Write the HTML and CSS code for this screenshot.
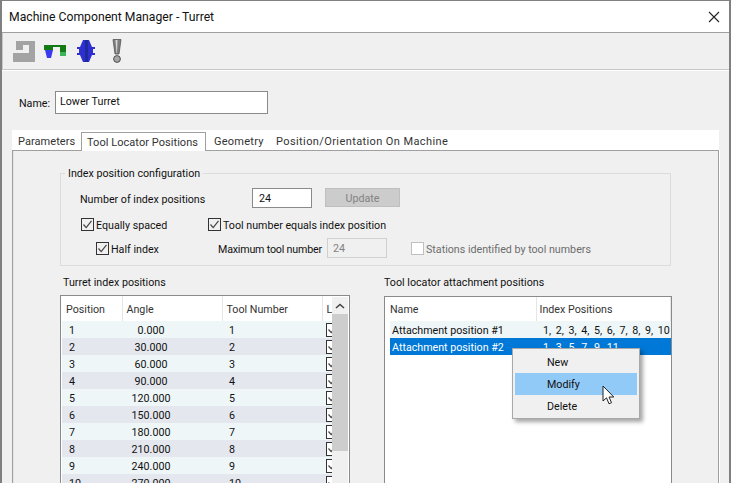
FILE: index.html
```html
<!DOCTYPE html>
<html lang="en">
<head>
    <meta charset="UTF-8">
    <meta name="viewport" content="width=device-width, initial-scale=1.0">
    <title>Machine Component Manager - Turret</title>
    <link rel="stylesheet" href="styles.css">
</head>
<body>
    <svg class="sprites" width="0" height="0">
        <symbol id="tick" viewBox="0 0 13 13">
            <path d="M2.5 6.5 L5.2 9.6 L10.5 2.8" fill="none" stroke="#444" stroke-width="1.2"/>
        </symbol>
    </svg>

    <div class="window">
        <div class="titlebar">
            <span>Machine Component Manager - Turret</span>
            <svg class="close" width="12" height="12" viewBox="0 0 12 12">
                <path d="M1 1 L11 11 M11 1 L1 11" stroke="#222" stroke-width="1.1"/>
            </svg>
        </div>

        <div class="toolbar">
            <svg class="tool-icon icon-locator" width="22" height="22" viewBox="0 0 22 22">
                <path d="M3 1 H22 V22 H0 V13 H16 V5 H10 V10 H3 Z" fill="#a3a3a3"/>
            </svg>
            <svg class="tool-icon icon-geometry" width="22" height="14" viewBox="0 0 22 14">
                <path d="M0 1 H22 V12 H16 V3 H9 V6 H0 Z" fill="#147a14"/>
                <path d="M16 8 H22 V12 H16 Z" fill="#3cb45a"/>
                <path d="M1 6 H9 L7 14 H3 Z" fill="#3a3aee"/>
            </svg>
            <svg class="tool-icon icon-turret" width="20" height="22" viewBox="0 0 20 22">
                <path d="M7 0 H13 L16 7 H19 V9 H17 V13 H19 V15 H16 L13 22 H7 L4 15 H1 V13 H3 V9 H1 V7 H4 Z" fill="#2f2fd0"/>
                <path d="M9 0 H12 V22 H9 Z" fill="#1c2a9c"/>
            </svg>
            <svg class="tool-icon icon-alert" width="10" height="24" viewBox="0 0 10 24">
                <path d="M1 0.5 H9 L7 15 H3 Z" fill="#7e7e7e" stroke="#555" stroke-width="0.8"/>
                <path d="M3.5 1 H5.5 L5 14 H4.5 Z" fill="#d8d8d8"/>
                <circle cx="5" cy="20" r="3.4" fill="#a5a5a5" stroke="#444" stroke-width="0.9"/>
            </svg>
        </div>

        <div class="content">
            <div class="name-row">
                <label>Name:</label>
                <div class="field name-field">Lower Turret</div>
            </div>

            <div class="tabs">
                <span class="tab tab-params">Parameters</span>
                <span class="tab active">Tool Locator Positions</span>
                <span class="tab tab-geometry">Geometry</span>
                <span class="tab tab-position">Position/Orientation On Machine</span>
            </div>

            <div class="panel">
                <fieldset class="group">
                    <legend>Index position configuration</legend>
                    <div class="group-row row-count">
                        <span class="count-label">Number of index positions</span>
                        <div class="field count-field">24</div>
                        <div class="update-btn">Update</div>
                    </div>
                    <div class="group-row row-checks">
                        <span class="check check-spaced">
                            <span class="box"><svg width="13" height="13"><use href="#tick"/></svg></span>
                            <span class="check-text">Equally spaced</span>
                        </span>
                        <span class="check">
                            <span class="box"><svg width="13" height="13"><use href="#tick"/></svg></span>
                            <span class="check-text">Tool number equals index position</span>
                        </span>
                    </div>
                    <div class="group-row row-half">
                        <span class="check check-half">
                            <span class="box"><svg width="13" height="13"><use href="#tick"/></svg></span>
                            <span class="check-text">Half index</span>
                        </span>
                        <span class="max-label">Maximum tool number</span>
                        <div class="field max-field">24</div>
                        <span class="check disabled">
                            <span class="box"></span>
                            <span class="check-text">Stations identified by tool numbers</span>
                        </span>
                    </div>
                </fieldset>

                <div class="lists">
                    <div class="list-col left-col">
                        <div class="list-title">Turret index positions</div>
                        <div class="listbox turret-box">
                            <table class="grid turret-grid">
                                <thead>
                                    <tr>
                                        <th class="col-pos">Position</th>
                                        <th class="col-angle">Angle</th>
                                        <th class="col-tool">Tool Number</th>
                                        <th class="col-l"><span class="clip">Locked</span></th>
                                    </tr>
                                </thead>
                                <tbody>
                                    <tr><td>1</td><td class="angle">0.000</td><td>1</td><td class="cell-l"><span class="box"><svg width="13" height="13"><use href="#tick"/></svg></span></td></tr>
                                    <tr><td>2</td><td class="angle">30.000</td><td>2</td><td class="cell-l"><span class="box"><svg width="13" height="13"><use href="#tick"/></svg></span></td></tr>
                                    <tr><td>3</td><td class="angle">60.000</td><td>3</td><td class="cell-l"><span class="box"><svg width="13" height="13"><use href="#tick"/></svg></span></td></tr>
                                    <tr><td>4</td><td class="angle">90.000</td><td>4</td><td class="cell-l"><span class="box"><svg width="13" height="13"><use href="#tick"/></svg></span></td></tr>
                                    <tr><td>5</td><td class="angle">120.000</td><td>5</td><td class="cell-l"><span class="box"><svg width="13" height="13"><use href="#tick"/></svg></span></td></tr>
                                    <tr><td>6</td><td class="angle">150.000</td><td>6</td><td class="cell-l"><span class="box"><svg width="13" height="13"><use href="#tick"/></svg></span></td></tr>
                                    <tr><td>7</td><td class="angle">180.000</td><td>7</td><td class="cell-l"><span class="box"><svg width="13" height="13"><use href="#tick"/></svg></span></td></tr>
                                    <tr><td>8</td><td class="angle">210.000</td><td>8</td><td class="cell-l"><span class="box"><svg width="13" height="13"><use href="#tick"/></svg></span></td></tr>
                                    <tr><td>9</td><td class="angle">240.000</td><td>9</td><td class="cell-l"><span class="box"><svg width="13" height="13"><use href="#tick"/></svg></span></td></tr>
                                    <tr><td>10</td><td class="angle">270.000</td><td>10</td><td class="cell-l"><span class="box"><svg width="13" height="13"><use href="#tick"/></svg></span></td></tr>
                                </tbody>
                            </table>
                            <div class="scrollbar">
                                <div class="scroll-up">
                                    <svg width="10" height="6" viewBox="0 0 10 6"><path d="M1 5 L5 1.5 L9 5" fill="none" stroke="#444" stroke-width="1.6"/></svg>
                                </div>
                                <div class="scroll-thumb"></div>
                            </div>
                        </div>
                    </div>

                    <div class="list-col right-col">
                        <div class="list-title">Tool locator attachment positions</div>
                        <div class="listbox attach-box">
                            <table class="grid attach-grid">
                                <thead>
                                    <tr>
                                        <th class="col-name">Name</th>
                                        <th>Index Positions</th>
                                    </tr>
                                </thead>
                                <tbody>
                                    <tr><td>Attachment position #1</td><td class="index-list">1, 2, 3, 4, 5, 6, 7, 8, 9, 10</td></tr>
                                    <tr class="selected"><td>Attachment position #2</td><td class="index-list">1, 3, 5, 7, 9, 11</td></tr>
                                </tbody>
                            </table>
                        </div>
                    </div>
                </div>
            </div>
        </div>
    </div>

    <div class="menu">
        <div class="menu-item">New</div>
        <div class="menu-item hover">Modify</div>
        <div class="menu-item">Delete</div>
    </div>

    <svg class="cursor" width="13" height="21" viewBox="0 0 13 21">
        <path d="M1 1 V16 L4.5 12.8 L7 18.8 L9.5 17.7 L7 12 H11.8 Z" fill="#fff" stroke="#222" stroke-width="1"/>
    </svg>
</body>
</html>
```

FILE: styles.css
```css
body {
    margin: 0;
    width: 731px;
    height: 483px;
    overflow: hidden;
    position: relative;
    font-family: Roboto, Arial, sans-serif;
    font-size: 10.7px;
    color: #111;
    background-color: #f0f0f0;
}
.sprites {
    position: absolute;
}
.window {
    height: 483px;
    box-sizing: border-box;
    border-top: 1px solid #808080;
    border-left: 2px solid #808080;
    border-right: 2px solid #808080;
    display: flex;
    flex-direction: column;
    overflow: hidden;
}
.titlebar {
    height: 32px;
    flex: none;
    box-sizing: border-box;
    background-color: #fff;
    border-bottom: 1px solid #a0a0a0;
    padding: 0 9px 0 7px;
    display: flex;
    align-items: center;
    justify-content: space-between;
    font-size: 12.2px;
}
.toolbar {
    height: 37px;
    flex: none;
    box-sizing: border-box;
    border-bottom: 1px solid #c8c8c8;
    box-shadow: 0 1px 0 #fff;
    border-left: 1px solid #c8c8c8;
    display: flex;
    align-items: center;
}
.tool-icon {
    flex: none;
}
.icon-locator {
    margin-left: 10px;
}
.icon-geometry {
    margin-left: 9px;
}
.icon-turret {
    margin-left: 10px;
}
.icon-alert {
    margin-left: 16px;
}
.content {
    flex: 1;
    padding: 21px 10px 0 10px;
    min-height: 0;
}
.name-row {
    display: flex;
    align-items: center;
    height: 23px;
    padding-left: 7px;
}
.name-row label {
    width: 36px;
    padding-top: 1px;
}
.field {
    box-sizing: border-box;
    background-color: #fff;
    border: 1px solid #8a8a8a;
    padding-left: 4px;
}
.name-field {
    width: 213px;
    height: 23px;
    line-height: 20px;
}
.tabs {
    margin-top: 16px;
    height: 20px;
    background-color: #fff;
    display: flex;
    align-items: flex-end;
    font-size: 11px;
    letter-spacing: 0.05px;
    color: #333;
}
.tab {
    box-sizing: border-box;
    height: 18px;
    line-height: 19px;
    white-space: nowrap;
}
.tab-params {
    width: 69px;
    padding-left: 6px;
}
.active {
    height: 19px;
    margin-bottom: -1px;
    background-color: #fff;
    border: 1px solid #a0a0a0;
    border-bottom: none;
    width: 125px;
    position: relative;
    z-index: 1;
    padding-left: 5px;
}
.tab-geometry {
    width: 70px;
    padding-left: 8px;
    letter-spacing: 0.25px;
}
.tab-position {
    letter-spacing: 0.4px;
}
.panel {
    box-sizing: border-box;
    height: 340px;
    border: 1px solid #a0a0a0;
    box-shadow: inset 1px 0 0 #e3e3e3, 1px 0 0 #fff;
    padding: 15px 47px 0 47px;
}
fieldset.group {
    margin: 0;
    padding: 0 0 0 20px;
    height: 100px;
    box-sizing: border-box;
    border: 1px solid #dcdcdc;
    min-width: 0;
}
.group legend {
    margin-left: -16px;
    padding: 0 3px;
    height: 14px;
    line-height: 16px;
}
.group-row {
    display: flex;
    align-items: center;
}
.row-count {
    height: 20px;
    margin-top: 8px;
}
.count-label {
    width: 172px;
    margin-left: -1px;
    padding-top: 2px;
    white-space: nowrap;
}
.count-field {
    width: 60px;
    height: 20px;
    line-height: 20px;
    padding-left: 6px;
}
.update-btn {
    margin-left: 13px;
    margin-top: -2px;
    box-sizing: border-box;
    width: 75px;
    height: 19px;
    line-height: 19px;
    text-align: center;
    background-color: #cccccc;
    border: 1px solid #bfbfbf;
    color: #838383;
}
.row-checks {
    margin-top: 7px;
    height: 18px;
}
.check {
    display: inline-flex;
    align-items: center;
    white-space: nowrap;
    gap: 2px;
}
.check-text {
    padding-top: 2px;
}
.box {
    box-sizing: border-box;
    display: block;
    flex: none;
    width: 13px;
    height: 13px;
    background-color: #f0f0f0;
    border: 1px solid #333;
}
.box svg {
    display: block;
    margin: -1px;
}
.check-spaced {
    width: 127px;
}
.row-half {
    margin-top: 5px;
    height: 20px;
}
.check-half {
    margin-left: 15px;
    width: 122px;
}
.max-label {
    width: 109px;
    padding-top: 2px;
    white-space: nowrap;
    letter-spacing: -0.2px;
}
.max-field {
    width: 60px;
    height: 20px;
    line-height: 20px;
    padding-left: 5px;
    background-color: #f0f0f0;
    border-color: #d0d0d0;
    color: #808080;
}
.disabled {
    margin-left: 24px;
    color: #6d6d6d;
}
.disabled .box {
    background-color: #fff;
    border-color: #c0c0c0;
}
.lists {
    display: flex;
    margin-top: 9px;
}
.list-col {
    flex: none;
}
.left-col {
    width: 324px;
}
.list-title {
    height: 14px;
    line-height: 16px;
    padding-left: 3px;
}
.right-col .list-title {
    padding-left: 0;
}
.listbox {
    margin-top: 6px;
    box-sizing: border-box;
    height: 240px;
    border: 1px solid #8a8a8a;
    background-color: #fff;
    position: relative;
    display: flex;
    overflow: hidden;
}
.turret-box {
    width: 290px;
    padding-left: 1px;
}
.attach-box {
    margin-top: 7px;
    width: 288px;
    padding-left: 5px;
}
.grid {
    border-collapse: collapse;
    table-layout: fixed;
    flex: none;
    align-self: flex-start;
}
.grid th {
    height: 24px;
    padding: 0 0 0 4px;
    box-sizing: border-box;
    font-weight: normal;
    text-align: left;
    color: #333;
    border-right: 1px solid #e5e5e5;
    white-space: nowrap;
    overflow: hidden;
}
.grid td {
    height: 17px;
    padding: 2px 0 0 7px;
    box-sizing: border-box;
    white-space: nowrap;
    overflow: hidden;
    line-height: 15px;
}
.turret-grid {
    width: 270px;
    background-color: #fff;
}
.turret-grid th {
    height: 25px;
    padding-top: 2px;
}
.col-pos {
    width: 60px;
}
.col-angle {
    width: 100px;
}
.col-tool {
    width: 100px;
}
.col-l {
    width: 11px;
}
.grid th.col-l {
    border-right: none;
    color: #333;
}
.clip {
    display: block;
    width: 8px;
    overflow: hidden;
}
.turret-grid tbody tr:nth-child(odd) td {
    background-color: #eef6f8;
}
.turret-grid tbody tr:nth-child(even) td {
    background-color: #e5e7ef;
}
.turret-grid tbody td.cell-l {
    background-color: #fff;
    padding: 0 0 0 4px;
}
.turret-grid td.angle {
    text-align: center;
    padding: 2px 42px 0 0;
}
.cell-l .box {
    width: 14px;
    height: 14px;
    background-color: #fff;
}
.scrollbar {
    position: absolute;
    top: 1px;
    right: 1px;
    bottom: 0;
    width: 16px;
    background-color: #f0f0f0;
}
.scroll-up {
    height: 17px;
    display: flex;
    align-items: center;
    justify-content: center;
}
.scroll-thumb {
    height: 137px;
    background-color: #cdcdcd;
}
.attach-grid {
    width: 281px;
}
.attach-grid th {
    padding-left: 0;
}
.attach-grid th + th {
    padding-left: 3px;
}
.col-name {
    width: 146px;
}
.attach-grid tbody tr:first-child {
    background-color: #eef6f8;
}
.attach-grid td {
    padding-left: 2px;
}
.attach-grid td.index-list {
    padding-left: 7px;
    word-spacing: 2px;
}
.selected {
    background-color: #0078d7;
    color: #fff;
}
.menu {
    position: absolute;
    left: 512px;
    top: 348px;
    width: 128px;
    height: 71px;
    box-sizing: border-box;
    padding: 2px;
    background-color: #f0f0f0;
    border: 1px solid #a8a8a8;
    box-shadow: 3px 3px 4px rgba(0, 0, 0, 0.35);
}
.menu-item {
    height: 22px;
    line-height: 24px;
    padding-left: 32px;
}
.hover {
    background-color: #91c9f7;
}
.cursor {
    position: absolute;
    left: 602px;
    top: 385px;
}
```
